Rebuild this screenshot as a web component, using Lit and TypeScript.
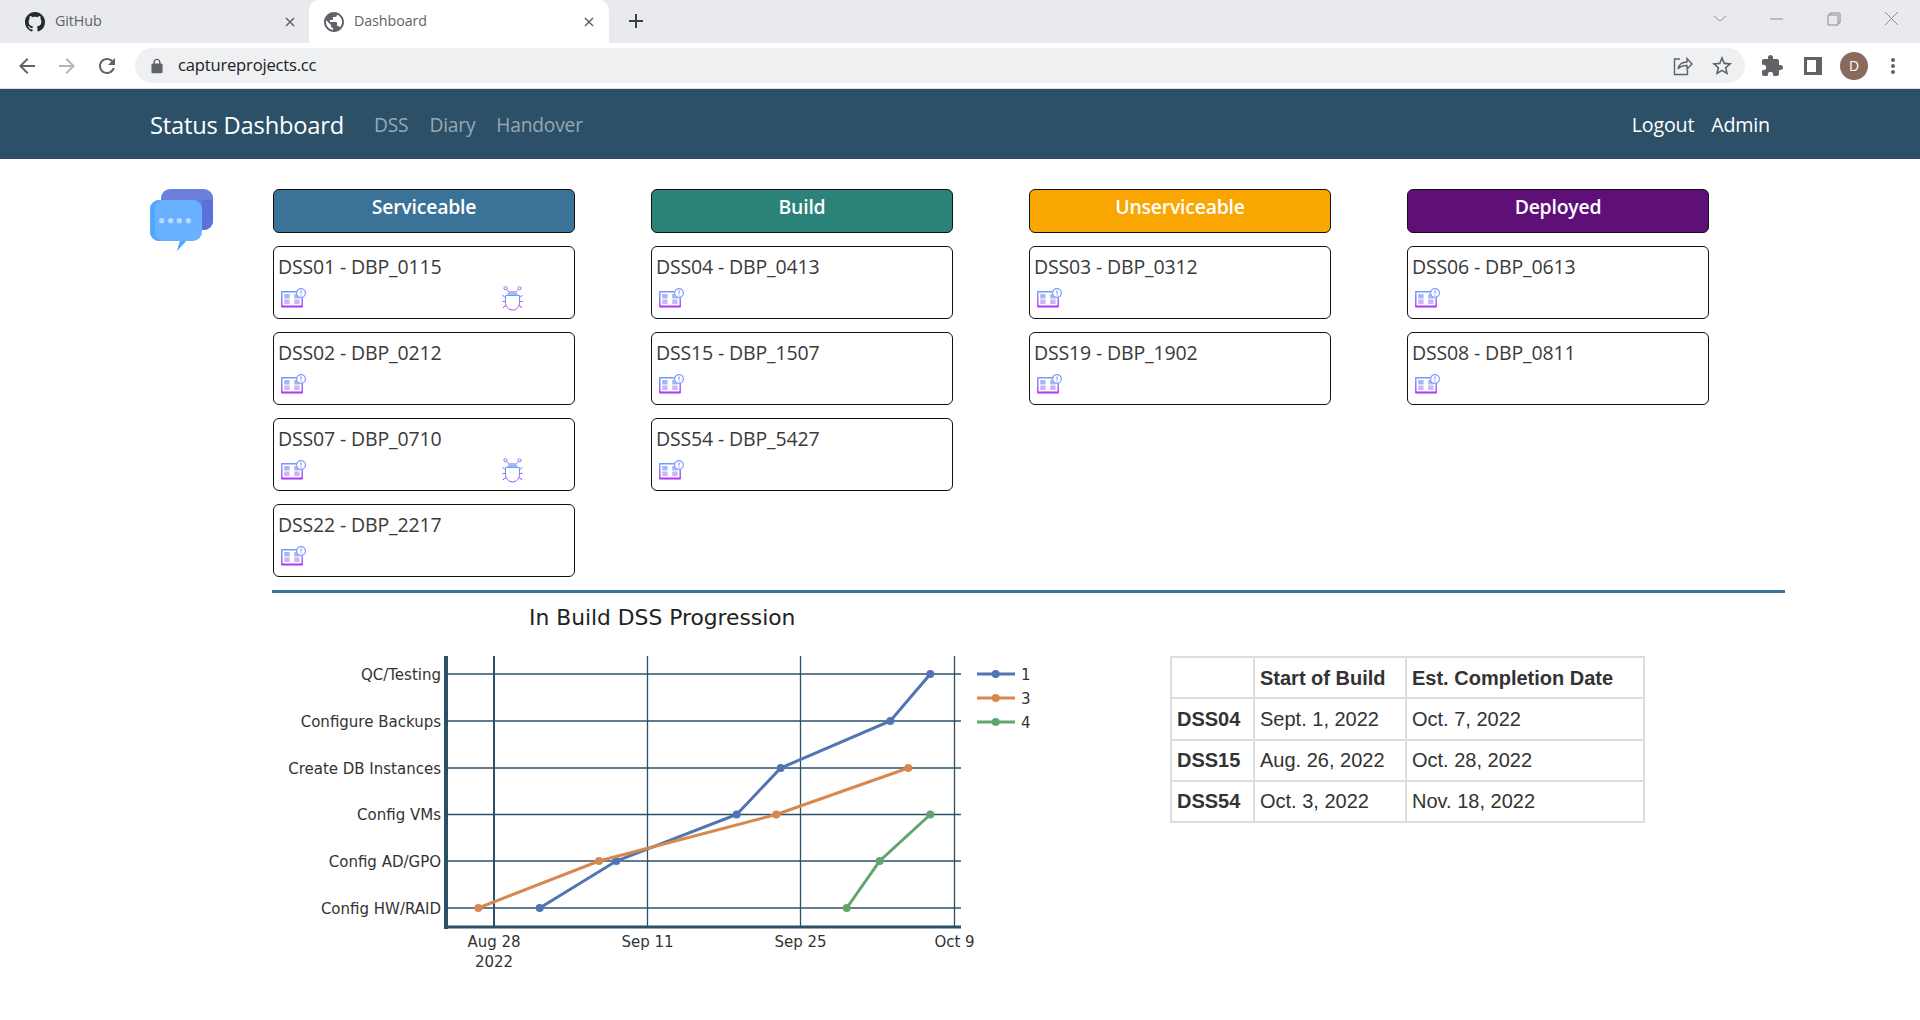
import { LitElement, html, svg, css } from "lit";
import { customElement } from "lit/decorators.js";

const UI = css`"Open Sans", "Noto Sans", sans-serif`;

const COLS = [
  { name: "Serviceable", cls: "blue", items: [["DSS01 - DBP_0115", true], ["DSS02 - DBP_0212", false], ["DSS07 - DBP_0710", true], ["DSS22 - DBP_2217", false]] },
  { name: "Build", cls: "teal", items: [["DSS04 - DBP_0413", false], ["DSS15 - DBP_1507", false], ["DSS54 - DBP_5427", false]] },
  { name: "Unserviceable", cls: "amber", items: [["DSS03 - DBP_0312", false], ["DSS19 - DBP_1902", false]] },
  { name: "Deployed", cls: "purple", items: [["DSS06 - DBP_0613", false], ["DSS08 - DBP_0811", false]] },
] as const;

const YS = [["QC/Testing", 674], ["Configure Backups", 721], ["Create DB Instances", 768], ["Config VMs", 814.5], ["Config AD/GPO", 861], ["Config HW/RAID", 908]] as const;
const XS = [[494, "Aug 28"], [647.5, "Sep 11"], [800.5, "Sep 25"], [954.5, "Oct 9"]] as const;
const SERIES = [
  { c: "#5174b3", n: "1", w: 3, pts: [[539.7, 908], [616.3, 861], [736.7, 814.5], [780.7, 768], [890.3, 721], [930.3, 674]] },
  { c: "#d8884f", n: "3", w: 3, pts: [[478.3, 908], [599, 861], [776.3, 814.5], [908.3, 768]] },
  { c: "#60a66a", n: "4", w: 3, pts: [[846.7, 908], [879.7, 861], [930.3, 814.5]] },
];
const TABLE = [["DSS04", "Sept. 1, 2022", "Oct. 7, 2022"], ["DSS15", "Aug. 26, 2022", "Oct. 28, 2022"], ["DSS54", "Oct. 3, 2022", "Nov. 18, 2022"]];

const bookIcon = html`<svg class="book" viewBox="0 0 25 21" width="25" height="21" fill="none">
  <defs>
    <linearGradient id="g1" x1="0" y1="0" x2="0" y2="1"><stop offset="0" stop-color="#6f9bff"/><stop offset="1" stop-color="#b13cf5"/></linearGradient>
  </defs>
  <path d="M.8 3.800h20.400v14.700h-20.400z" stroke="url(#g1)" stroke-width="1.400"/>
  <path d="M.8 18.500h20.400" stroke="#b13cf5" stroke-width="1.800"/>
  <path d="M11 3.800v16.800" stroke="url(#g1)" stroke-width="1.300"/>
  <path d="M3.200 6h5.400v4.500h-5.400zM13.200 6h5.400v4.500h-5.400z" fill="#a6b7f2"/>
  <path d="M3.200 11.500h5.400v4.500h-5.400zM13.200 11.500h5.400v4.500h-5.400z" fill="#c9b6f6"/>
  <circle cx="20" cy="5" r="4.400" fill="#fff" stroke="#7d9bff" stroke-width="1.200"/>
  <path d="M20 2.600v2.900M20 6.500v1" stroke="#7d8cff" stroke-width="1.100"/>
</svg>`;

const bugIcon = html`<svg class="bug" viewBox="0 0 21 25" width="21" height="25" fill="none">
  <defs><linearGradient id="g2" x1="0" y1="0" x2="0" y2="1"><stop offset="0" stop-color="#6f9bff"/><stop offset="1" stop-color="#b13cf5"/></linearGradient></defs>
  <path d="M5 9.500c.5-3.200 3-4.700 5.500-4.700s5 1.500 5.500 4.700z" fill="#a4b8f5"/>
  <g stroke="url(#g2)" stroke-width="1">
    <circle cx="3.500" cy="2.200" r="1.600"/><circle cx="17.500" cy="2.200" r="1.600"/>
    <path d="M4.800 3.500l2.500 2.500M16.200 3.500l-2.500 2.500"/>
    <path d="M3.500 9.500h14v6.500c0 4.500-3 8-7 8s-7-3.500-7-8z"/>
    <path d="M10.500 9.500v14.500"/>
    <path d="M3.500 11.500l-2.500-1.500v-1M17.500 11.500l2.500-1.500v-1M3.500 15.500h-3M17.500 15.500h3M4 19.500l-2.500 1.500v1M17 19.500l2.500 1.500v1"/>
  </g>
</svg>`;

const logo = html`<svg class="logo" viewBox="0 0 63 62" width="63" height="62">
  <rect x="11" y="0" width="52" height="41" rx="9" fill="#6b80dd"/>
  <path d="M52 11h11v21a9 9 0 0 1-9 9h-2z" fill="#5b70d9"/>
  <path d="M9 11h34a9 9 0 0 1 9 9v23a9 9 0 0 1-9 9h-7l-9 10 3-10h-21a9 9 0 0 1-9-9v-23a9 9 0 0 1 9-9z" fill="#6ab2ff"/>
  <path d="M9 11h4a9 9 0 0 0-8 9v23a9 9 0 0 0 8 9h-4a9 9 0 0 1-9-9v-23a9 9 0 0 1 9-9z M30 52h6l-9 10z" fill="#52a8fd"/>
  <g fill="#b9dbff"><circle cx="11.700" cy="31.700" r="2.600"/><circle cx="20.700" cy="31.700" r="2.600"/><circle cx="29.300" cy="31.700" r="2.600"/><circle cx="38.300" cy="31.700" r="2.600"/></g>
</svg>`;

@customElement("app-root")
export class AppRoot extends LitElement {
  static styles = css`
    :host { display: block; background: #fff; height: 1020px; overflow: hidden; color: #333; }
    .strip { height: 43px; background: #e8eaed; display: flex; font: 14.3px ${UI}; color: #5f6368; position: relative; }
    .tab { width: 300px; height: 43px; box-sizing: border-box; display: flex; align-items: center; padding: 0 14px 0 15px; border-radius: 10px 10px 0 0; flex: none; }
    .tab.first { width: 309px; padding-left: 25px; padding-right: 13px; }
    .tab.active { background: #fff; }
    .tab .fav { margin-right: 10px; flex: none; }
    .tab .name { flex: 1; letter-spacing: -0.1px; padding-bottom: 2px; }
    .plus { margin: 13px 0 0 19px; flex: none; }
    .win { margin-left: auto; display: flex; align-items: flex-start; }
    .win svg { margin-top: 10px; }
    .addr { height: 45px; background: #fff; display: flex; align-items: center; border-bottom: 1px solid #dcdcdc; box-sizing: content-box; }
    .nav-btns { display: flex; width: 135px; padding-left: 15px; box-sizing: border-box; gap: 16px; flex: none; }
    .pill { width: 1610px; height: 35px; border-radius: 18px; background: #eef0f2; display: flex; align-items: center; font: 16.6px ${UI}; color: #202124; flex: none; }
    .pill .lock { margin: 0 14px 0 15px; }
    .pill .url { flex: 1; letter-spacing: -0.2px; padding-bottom: 2px; }
    .pill .share { margin-right: 17px; }
    .pill .star { margin-right: 11px; }
    .tools { display: flex; align-items: center; margin-left: 15px; }
    .tools .puzzle { margin-right: 20px; }
    .avatar { width: 28px; height: 28px; border-radius: 50%; background: #8a6a5c; color: #fff; font: 14px ${UI}; display: flex; align-items: center; justify-content: center; margin: 0 15px 0 18px; }

    .navbar { height: 70px; background: #2b5068; display: flex; align-items: center; padding: 0 150px 0 150px; font-family: ${UI}; }
    .brand { color: #fff; font-size: 23.7px; letter-spacing: -0.2px; margin-right: 30px; padding-top: 1px; }
    .links { display: flex; gap: 21px; font-size: 19.2px; letter-spacing: -0.2px; color: #95a8b4; padding-top: 1px; }
    .right { margin-left: auto; display: flex; gap: 17px; font-size: 19.7px; letter-spacing: -0.2px; color: #fff; padding-top: 1px; }

    .board { display: flex; padding: 30px 0 0 150px; font-family: ${UI}; }
    .logo { flex: none; margin-right: 60px; }
    .grid { display: grid; grid-template-columns: repeat(4, 302px); column-gap: 76px; align-content: start; height: 401px; }
    .col { display: flex; flex-direction: column; gap: 13px; }
    .head { height: 44px; box-sizing: border-box; border: 1px solid #111; border-radius: 6px; color: #fff; font-weight: 600; font-size: 19.4px; letter-spacing: -0.2px; text-align: center; padding-top: 3px; }
    .blue { background: #3b7297; }
    .teal { background: #2a8279; }
    .amber { background: #f9a602; }
    .purple { background: #5e1078; }
    .card { height: 73px; box-sizing: border-box; border: 1px solid #111; border-radius: 6px; padding: 6px 4px 0; font-size: 19.5px; letter-spacing: -0.15px; color: #3a3a3a; display: flex; flex-direction: column; line-height: 28px; }
    .icons { display: flex; align-items: center; height: 28px; padding-left: 3px; margin-top: 3px; }
    .book { flex: none; }
    .bug { flex: none; margin-left: 196px; }

    .rule { height: 3px; background: #3b7297; margin: 0 135px 0 272px; }
    .lower { display: flex; align-items: flex-start; }
    .chart { flex: none; margin-left: 272px; display: block; }
    .chart text { font-family: "DejaVu Sans", Verdana, sans-serif; fill: #2a3f5f; }
    .chart .tick { font-size: 15px; fill: #333; }
    .chart .title { font-size: 21.800px; fill: #222; }
    table { margin: 63px 0 0 118px; border-collapse: separate; border-spacing: 0; border: 1px solid #ddd; font: 20px "Liberation Sans", Arial, sans-serif; color: #333; height: 167px; }
    th, td { border: 1px solid #ddd; border-width: 1px; padding: 0 5px; height: 41px; box-sizing: border-box; text-align: left; line-height: 1; white-space: nowrap; }
    .c1 { width: 83px; }
    .c2 { width: 152px; }
    .c3 { width: 238px; }
  `;

  private chart() {
    const grid = "#2b5068";
    return svg`<svg class="chart" width="780" height="420" viewBox="272 593 780 420">
      <text class="title" x="529" y="625">In Build DSS Progression</text>
      ${YS.map(([l, y]) => svg`
        <line x1="446" x2="961" y1=${y} y2=${y} stroke=${grid} stroke-width="1.300"/>
        <text class="tick" x="441" y=${y + 5.5} text-anchor="end">${l}</text>`)}
      ${XS.map(([x, l], i) => svg`
        <line x1=${x} x2=${x} y1="656" y2="927" stroke=${grid} stroke-width=${i === 0 ? 2 : 1.3}/>
        <text class="tick" x=${x} y="947" text-anchor="middle">${l}</text>`)}
      <text class="tick" x="494" y="967" text-anchor="middle">2022</text>
      <line x1="446" x2="446" y1="656" y2="929" stroke=${grid} stroke-width="4"/>
      <line x1="444" x2="961" y1="927" y2="927" stroke=${grid} stroke-width="3"/>
      ${SERIES.map((s) => svg`
        <polyline points=${s.pts.map((p) => p.join(",")).join(" ")} fill="none" stroke=${s.c} stroke-width=${s.w}/>
        ${s.pts.map((p) => svg`<circle cx=${p[0]} cy=${p[1]} r="4" fill=${s.c}/>`)}`)}
      ${SERIES.map((s, i) => {
        const y = 674 + i * 24;
        return svg`<line x1="977" x2="1015" y1=${y} y2=${y} stroke=${s.c} stroke-width="3"/>
          <circle cx="995.700" cy=${y} r="4" fill=${s.c}/>
          <text class="tick" x="1021" y=${y + 5.5}>${s.n}</text>`;
      })}
    </svg>`;
  }

  private browser() {
    const x = html`<svg width="12" height="12" viewBox="0 0 12 12"><path d="M2 2l8 8M10 2l-8 8" stroke="#5f6368" stroke-width="1.500"/></svg>`;
    return html`
      <div class="strip">
        <div class="tab first">
          <svg class="fav" width="20" height="20" viewBox="0 0 16 16"><path fill="#24292f" d="M8 0C3.58 0 0 3.58 0 8c0 3.54 2.290 6.530 5.470 7.590.4.070.55-.17.55-.38 0-.19-.01-.82-.01-1.490-2.010.37-2.530-.49-2.690-.94-.09-.23-.48-.94-.82-1.130-.28-.15-.68-.52-.01-.53.63-.01 1.080.58 1.230.82.72 1.210 1.870.87 2.330.66.07-.52.28-.87.51-1.070-1.780-.2-3.640-.89-3.640-3.950 0-.87.31-1.590.82-2.150-.08-.2-.36-1.020.08-2.120 0 0 .67-.21 2.200.82.64-.18 1.320-.27 2-.27.68 0 1.360.09 2 .27 1.530-1.040 2.200-.82 2.200-.82.44 1.100.16 1.920.08 2.120.51.56.82 1.270.82 2.150 0 3.070-1.870 3.750-3.650 3.950.29.25.54.73.54 1.480 0 1.070-.01 1.930-.01 2.200 0 .21.15.46.55.38A8.013 8.013 0 0016 8c0-4.420-3.580-8-8-8z"/></svg>
          <span class="name">GitHub</span>${x}
        </div>
        <div class="tab active">
          <svg class="fav" width="20" height="20" viewBox="2 2 20 20"><path fill="#5f6368" d="M12 2C6.480 2 2 6.480 2 12s4.480 10 10 10 10-4.480 10-10S17.520 2 12 2zm-1 17.930c-3.950-.49-7-3.850-7-7.930 0-.62.08-1.210.21-1.790L9 15v1c0 1.100.9 2 2 2v1.930zm6.900-2.540c-.26-.81-1-1.390-1.900-1.390h-1v-3c0-.55-.45-1-1-1H8v-2h2c.55 0 1-.45 1-1V7h2c1.100 0 2-.9 2-2v-.41c2.930 1.190 5 4.060 5 7.410 0 2.080-.8 3.970-2.100 5.390z"/></svg>
          <span class="name">Dashboard</span>${x}
        </div>
        <svg class="plus" width="16" height="16" viewBox="0 0 16 16"><path d="M8 1v14M1 8h14" stroke="#3c4043" stroke-width="2"/></svg>
        <div class="win">
          <svg width="57" height="20" viewBox="0 0 57 20"><path d="M22 6l6 5 6-5" fill="none" stroke="#9a9ca0" stroke-width="1"/></svg>
          <svg width="57" height="20" viewBox="0 0 57 20"><path d="M21 9h13" stroke="#8a8c90" stroke-width="1"/></svg>
          <svg width="57" height="20" viewBox="0 0 57 20"><path d="M22 5h10v10h-10zM24 5v-2h10v10h-2" fill="none" stroke="#8a8c90" stroke-width="1"/></svg>
          <svg width="57" height="20" viewBox="0 0 57 20"><path d="M22 2l13 13M35 2l-13 13" stroke="#8a8c90" stroke-width="1"/></svg>
        </div>
      </div>
      <div class="addr">
        <div class="nav-btns">
          <svg width="24" height="24" viewBox="0 0 24 24"><path fill="#5f6368" d="M20 11H7.830l5.590-5.590L12 4l-8 8 8 8 1.410-1.410L7.830 13H20v-2z"/></svg>
          <svg width="24" height="24" viewBox="0 0 24 24"><path fill="#b4b6b9" d="M4 11h12.170l-5.590-5.590L12 4l8 8-8 8-1.410-1.410L16.170 13H4v-2z"/></svg>
          <svg width="24" height="24" viewBox="0 0 24 24"><path fill="#5f6368" d="M17.650 6.350C16.200 4.900 14.210 4 12 4c-4.420 0-7.990 3.580-7.990 8s3.570 8 7.990 8c3.730 0 6.840-2.550 7.730-6h-2.080c-.82 2.330-3.040 4-5.650 4-3.310 0-6-2.690-6-6s2.690-6 6-6c1.660 0 3.140.69 4.220 1.780L13 11h7V4l-2.350 2.350z"/></svg>
        </div>
        <div class="pill">
          <svg class="lock" width="14" height="16" viewBox="3 0 18 23"><path fill="#5f6368" d="M18 8h-1V6c0-2.760-2.240-5-5-5S7 3.240 7 6v2H6c-1.100 0-2 .9-2 2v10c0 1.100.9 2 2 2h12c1.100 0 2-.9 2-2V10c0-1.100-.9-2-2-2zM9 6c0-1.660 1.340-3 3-3s3 1.340 3 3v2H9V6z"/></svg>
          <span class="url">captureprojects.cc</span>
          <svg class="share" width="20" height="20" viewBox="0 0 20 20" fill="none" stroke="#5f6368" stroke-width="1.400"><path d="M7 3H1.500v15.500h13V14"/><path d="M5 13c1-5 5-7 9-7V2.500l5 5.500-5 5V9.500c-4 0-7 1-9 3.500z"/></svg>
          <svg class="star" width="24" height="24" viewBox="0 0 24 24"><path fill="#5f6368" d="M22 9.240l-7.190-.62L12 2 9.190 8.630 2 9.240l5.460 4.730L5.820 21 12 17.270 18.180 21l-1.630-7.030L22 9.240zM12 15.400l-3.760 2.270 1-4.280-3.320-2.880 4.380-.38L12 6.100l1.710 4.040 4.380.38-3.320 2.880 1 4.280L12 15.400z"/></svg>
        </div>
        <div class="tools">
          <svg class="puzzle" width="24" height="24" viewBox="0 0 24 24"><path fill="#5f6368" d="M20.500 11H19V7c0-1.100-.9-2-2-2h-4V3.500C13 2.120 11.880 1 10.500 1S8 2.120 8 3.500V5H4c-1.100 0-1.990.9-1.990 2v3.800H3.500c1.490 0 2.700 1.210 2.700 2.700s-1.210 2.700-2.700 2.700H2V20c0 1.100.9 2 2 2h3.800v-1.500c0-1.490 1.210-2.700 2.700-2.700 1.490 0 2.700 1.210 2.700 2.700V22H17c1.100 0 2-.9 2-2v-4h1.500c1.380 0 2.500-1.120 2.500-2.500S21.880 11 20.500 11z"/></svg>
          <svg width="18" height="18" viewBox="0 0 18 18"><path fill="#5f6368" fill-rule="evenodd" d="M0 0h18v18H0zM3 3v12h9V3z"/></svg>
          <div class="avatar">D</div>
          <svg width="20" height="20" viewBox="0 0 20 20"><g fill="#5f6368"><circle cx="10" cy="4" r="2"/><circle cx="10" cy="10" r="2"/><circle cx="10" cy="16" r="2"/></g></svg>
        </div>
      </div>`;
  }

  render() {
    return html`
      ${this.browser()}
      <div class="navbar">
        <span class="brand">Status Dashboard</span>
        <div class="links"><span>DSS</span><span>Diary</span><span>Handover</span></div>
        <div class="right"><span>Logout</span><span>Admin</span></div>
      </div>
      <div class="board">
        ${logo}
        <div class="grid">
          ${COLS.map((c) => html`<div class="col">
            <div class="head ${c.cls}">${c.name}</div>
            ${c.items.map(([n, bug]) => html`<div class="card">
              <span>${n}</span>
              <div class="icons">${bookIcon}${bug ? bugIcon : ""}</div>
            </div>`)}
          </div>`)}
        </div>
      </div>
      <div class="rule"></div>
      <div class="lower">
        ${this.chart()}
        <table>
          <tr><th class="c1"></th><th class="c2">Start of Build</th><th class="c3">Est. Completion Date</th></tr>
          ${TABLE.map((r) => html`<tr><th>${r[0]}</th><td>${r[1]}</td><td>${r[2]}</td></tr>`)}
        </table>
      </div>
    `;
  }
}
